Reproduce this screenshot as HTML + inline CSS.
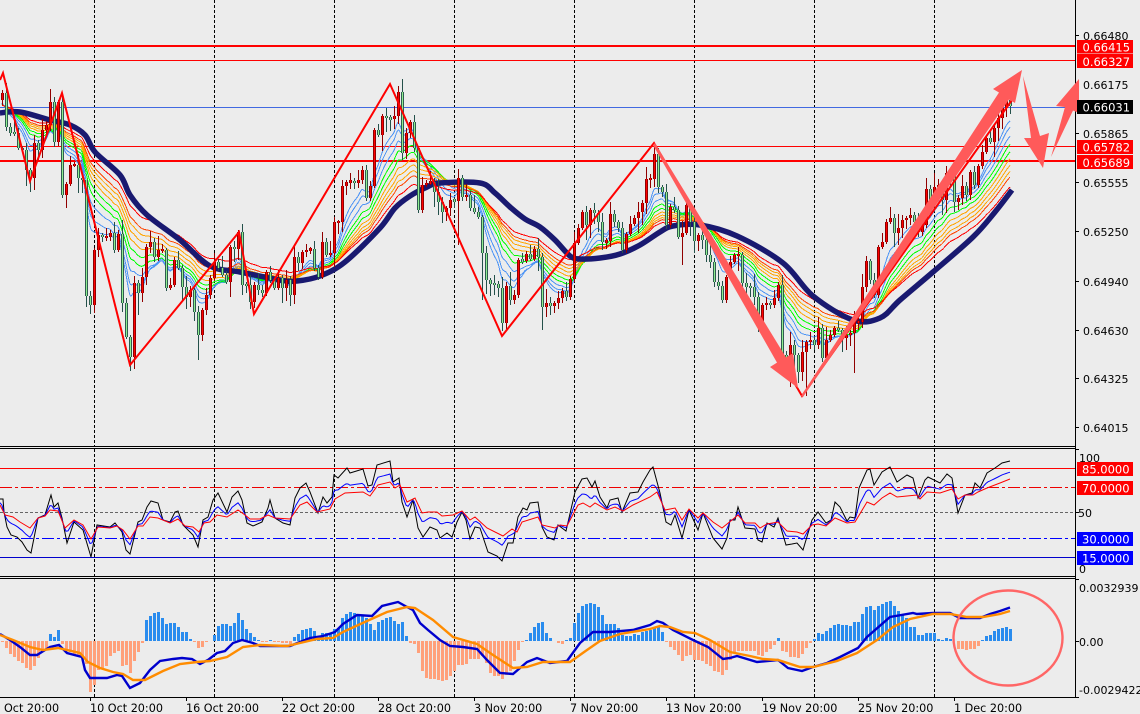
<!DOCTYPE html>
<html lang="en"><head><meta charset="utf-8"><title>Chart</title>
<style>
html,body{margin:0;padding:0;background:#ececec;width:1140px;height:714px;overflow:hidden}
svg{display:block;position:absolute;left:0;top:0}
text{font-family:"DejaVu Sans","Liberation Sans",sans-serif;font-size:11px;fill:#000}
.w{fill:#fff;font-size:11.5px}
.t{font-size:11.2px}
</style></head><body>
<svg id="s" width="1140" height="714" viewBox="0 0 1140 714" xmlns="http://www.w3.org/2000/svg">
<rect width="1140" height="714" fill="#ececec"/>
<g stroke="#000" stroke-dasharray="3 2" stroke-width="1" shape-rendering="crispEdges">
<path d="M94.5 0V446M214.5 0V446M334.5 0V446M454.5 0V446M574.5 0V446M694.5 0V446M814.5 0V446M934.5 0V446"/>
<path d="M94.5 449V576M214.5 449V576M334.5 449V576M454.5 449V576M574.5 449V576M694.5 449V576M814.5 449V576M934.5 449V576"/>
<path d="M94.5 579V697M214.5 579V697M334.5 579V697M454.5 579V697M574.5 579V697M694.5 579V697M814.5 579V697M934.5 579V697"/>
</g>
<g shape-rendering="crispEdges" fill="none">
<path d="M0 46H1075" stroke="#f00" stroke-width="2"/>
<path d="M0 60.5H1075" stroke="#f00"/>
<path d="M0 107.5H1075" stroke="#4169e1"/>
<path d="M0 146.5H1075" stroke="#f00"/>
<path d="M0 161H1075" stroke="#f00" stroke-width="2"/>
<path d="M0 468.5H1075" stroke="#f00"/>
<path d="M0 487.5H1075" stroke="#e00" stroke-dasharray="12 3 3 3"/>
<path d="M0 512.5H1075" stroke="#666" stroke-dasharray="3 2"/>
<path d="M0 538.5H1075" stroke="#00f" stroke-dasharray="12 3 3 3"/>
<path d="M0 557.5H1075" stroke="#00c"/>
</g>
<g id="rib" fill="none" stroke-width="1"></g>
<g id="navy" fill="none"></g>
<g id="can"></g>
<path fill="none" stroke="#f00" stroke-width="2" d="M0 80L3 73L30 181L62 93L130 365L239 232L254 314L390 84L502 336L654 143L802 396L1012 100"/>
<g id="rsi" fill="none" stroke-width="1"></g>
<g id="hist" shape-rendering="crispEdges"></g>
<g id="macd" fill="none" stroke-width="2.4"></g>
<ellipse cx="1008" cy="638" rx="54.5" ry="47.5" fill="none" stroke="#f66" stroke-width="2.4"/>
<g shape-rendering="crispEdges" fill="none" stroke="#000">
<path d="M0 446.5H1075M0 448.5H1075M0 576.5H1075M0 578.5H1075M0 697.5H1075M1075.5 0V697"/>
<path d="M1075 35.5H1079M1075 84.5H1079M1075 133.5H1079M1075 182.5H1079M1075 231.5H1079M1075 281.5H1079M1075 330.5H1079M1075 378.5H1079M1075 427.5H1079M1075 449.5H1079M1075 512.5H1079M1075 579.5H1079M1075 641.5H1079M1075 697.5H1079"/>
<path d="M90.5 697V701M186.5 697V701M282.5 697V701M378.5 697V701M474.5 697V701M570.5 697V701M666.5 697V701M762.5 697V701M858.5 697V701M954.5 697V701"/>
</g>
<g fill="#ff5a5a">
<polygon points="653,145 777,362.6 770,367 798,388 793,353 786,357.4 655,143"/>
<polygon points="801,396 999,92.5 993,89 1022,70 1015,103 1009,99.5 803,397"/>
<polygon points="1023,76 1031,138 1024,138 1043,168 1049,133 1040,136"/>
<polygon points="1051,157 1065,107 1056,106 1079,79 1079,113 1073,110.5"/>
</g>
<rect x="1077" y="40" width="56" height="13.5" fill="#f00"/>
<rect x="1077" y="54" width="56" height="14" fill="#f00"/>
<rect x="1077" y="100" width="56" height="14" fill="#000"/>
<rect x="1077" y="140" width="56" height="14" fill="#f00"/>
<rect x="1077" y="155" width="56" height="14" fill="#f00"/>
<rect x="1077" y="462" width="56" height="14" fill="#f00"/>
<rect x="1077" y="481" width="56" height="14" fill="#f00"/>
<rect x="1077" y="532" width="56" height="14" fill="#00f"/>
<rect x="1077" y="551" width="56" height="14" fill="#00f"/>
<text x="1083" y="40">0.66480</text>
<text class="w" x="1082.5" y="51.5">0.66415</text>
<text class="w" x="1082.5" y="66">0.66327</text>
<text x="1083" y="89">0.66175</text>
<text class="w" x="1082.5" y="111.5">0.66031</text>
<text x="1083" y="138">0.65865</text>
<text class="w" x="1082.5" y="151.5">0.65782</text>
<text class="w" x="1082.5" y="167">0.65689</text>
<text x="1083" y="187">0.65555</text>
<text x="1083" y="236">0.65250</text>
<text x="1083" y="286">0.64940</text>
<text x="1083" y="335">0.64630</text>
<text x="1083" y="383">0.64325</text>
<text x="1083" y="432">0.64015</text>
<text x="1079" y="462">100</text>
<text class="w" x="1082" y="473.5">85.0000</text>
<text class="w" x="1082" y="492.5">70.0000</text>
<text x="1078" y="517">50</text>
<text class="w" x="1082" y="543.5">30.0000</text>
<text class="w" x="1082" y="562.5">15.0000</text>
<text x="1079" y="573">0</text>
<text x="1079" y="592">0.0032939</text>
<text x="1079" y="646">0.00</text>
<text x="1079" y="694">-0.0029422</text>
<text class="t" x="4" y="712">Oct 20:00</text>
<text class="t" x="90" y="712">10 Oct 20:00</text>
<text class="t" x="186" y="712">16 Oct 20:00</text>
<text class="t" x="282" y="712">22 Oct 20:00</text>
<text class="t" x="378" y="712">28 Oct 20:00</text>
<text class="t" x="474" y="712">3 Nov 20:00</text>
<text class="t" x="570" y="712">7 Nov 20:00</text>
<text class="t" x="666" y="712">13 Nov 20:00</text>
<text class="t" x="762" y="712">19 Nov 20:00</text>
<text class="t" x="858" y="712">25 Nov 20:00</text>
<text class="t" x="954" y="712">1 Dec 20:00</text>
</svg>
<script>
(function(){
var NS="http://www.w3.org/2000/svg";
function P(par,d,attrs){var e=document.createElementNS(NS,"path");e.setAttribute("d",d);for(var k in attrs)e.setAttribute(k,attrs[k]);document.getElementById(par).appendChild(e);}
function pairs(s){return s.trim().split(/\s+/).map(function(p){var a=p.split(/[:,]/);return[+a[0],+a[1]];});}
function interp(t,x){if(x<=t[0][0])return t[0][1];for(var i=1;i<t.length;i++){if(x<=t[i][0]){var a=t[i-1],b=t[i];return a[1]+(b[1]-a[1])*(x-a[0])/(b[0]-a[0]);}}return t[t.length-1][1];}
function line(t){return "M"+t.map(function(p){return p[0]+" "+p[1];}).join("L");}
function smooth(t){var d="M"+t[0][0]+" "+t[0][1];for(var i=0;i<t.length-1;i++){var p0=t[Math.max(i-1,0)],p1=t[i],p2=t[i+1],p3=t[Math.min(i+2,t.length-1)];
 d+="C"+(p1[0]+(p2[0]-p0[0])/6).toFixed(1)+" "+(p1[1]+(p2[1]-p0[1])/6).toFixed(1)+" "+(p2[0]-(p3[0]-p1[0])/6).toFixed(1)+" "+(p2[1]-(p3[1]-p1[1])/6).toFixed(1)+" "+p2[0]+" "+p2[1];}return d;}
var C=pairs("2:93 6:127 10:133 14:133 18:148 22:150 26:170 30:178 34:143 38:150 42:130 46:125 50:102 54:142 58:102 62:195 66:184 70:165 74:165 78:178 82:180 86:296 90:305 94:250 98:235 102:237 106:237 110:233 114:250 118:234 122:303 126:337 130:357 134:283 138:293 142:277 146:247 150:242 154:257 158:250 162:250 166:288 170:285 174:260 178:268 182:287 186:297 190:290 194:312 198:335 202:310 206:295 210:278 214:262 218:268 222:275 226:282 230:247 234:249 238:232 242:285 246:285 250:302 254:285 258:290 262:293 266:272 270:280 274:288 278:278 282:288 286:280 290:295 294:257 298:263 302:252 306:250 310:249 314:268 318:277 322:242 326:255 330:253 334:222 338:222 342:186 346:182 350:181 354:183 358:180 362:170 366:198 370:186 374:130 378:135 382:116 386:118 390:119 394:116 398:92 402:153 406:133 410:122 414:148 418:210 422:185 426:183 430:182 434:192 438:202 442:212 446:208 450:200 454:201 458:178 462:197 466:195 470:208 474:212 478:217 482:253 486:280 490:284 494:284 498:288 502:323 506:286 510:300 514:295 518:260 522:261 526:254 530:259 534:249 538:257 542:307 546:303 550:306 554:303 558:298 562:291 566:297 570:279 574:243 578:228 582:212 586:225 590:210 594:213 598:222 602:242 606:241 610:214 614:222 618:228 622:250 626:234 630:224 634:218 638:212 642:203 646:179 650:179 654:154 658:187 662:192 666:225 670:207 674:210 678:237 682:233 686:205 690:222 694:241 698:235 702:240 706:255 710:262 714:282 718:286 722:300 726:277 730:262 734:255 738:255 742:283 746:287 750:287 754:297 758:325 762:305 766:303 770:305 774:298 778:285 782:355 786:372 790:345 794:355 798:372 802:352 806:342 810:340 814:345 818:328 822:358 826:340 830:335 834:328 838:330 842:338 846:335 850:333 854:322 858:322 862:287 866:261 870:280 874:295 878:247 882:242 886:222 890:218 894:233 898:228 902:220 906:218 910:215 914:222 918:232 922:225 926:189 930:200 934:187 938:185 942:200 946:173 950:175 954:202 958:198 962:186 966:195 970:172 974:185 978:166 982:152 986:138 990:142 994:128 998:118 1002:108 1006:100 1010:106");
var longB={66:208,198:360,854:373,682:265,482:300,542:330,122:312,138:315,458:245,806:396,786:378};
var longT={86:180,366:165,398:86,654:143,802:340};
var wR="",bR="",wG="",bG="";
var prev=100;
C.forEach(function(p,i){
 var x=p[0],c=p[1],o=prev;
 var h1=(x*7919%97)/97,h2=(x*104729%89)/89;
 var top=Math.min(o,c),bot=Math.max(o,c);
 var wt=longT[x]||top-2-h1*h1*12,wb=longB[x]||bot+2+h2*h2*14;
 if(bot-top<2){top-=1;bot+=1;}
 var up=c<o||(c==o&&i%2==0);
 var X=x+.5;
 var w="M"+X+" "+Math.round(wt)+"V"+Math.round(wb);
 var b="M"+X+" "+Math.round(top)+"V"+Math.round(bot);
 if(up){wR+=w;bR+=b;}else{wG+=w;bG+=b;}
 prev=c;
});
var ns=[7,9,12,15,18,21,24,27,30,36];
var cols=["#4d94f5","#4d94f5","#4d94f5","#00ff00","#00ff00","#ffa500","#ffa500","#ffa500","#ff4500","#ff0000"];
ns.forEach(function(n,j){
 var a=2/(n+1),v=106,pts=[];
 C.forEach(function(p){v=v+a*(p[1]-v);pts.push([p[0],Math.round(v*10)/10]);});
 P("rib",smooth(pts),{stroke:cols[j],"shape-rendering":"crispEdges"});
});
P("navy",smooth(pairs("0,113 20,112 50,120 70,125 85,135 95,152 120,175 130,195 147,215 180,240 210,266 240,272 280,280 297,281 320,276 345,262 380,228 395,208 410,196 425,188 440,183 480,183 495,193 510,207 525,219 540,227 555,240 570,256 580,259 600,258 620,254 640,245 660,232 673,226 700,225 737,236 783,263 813,296 853,320 880,318 900,300 933,272 973,237 995,212 1012,190")),{stroke:"#191970","stroke-width":5.5});
P("can",wG,{stroke:"#24504a","stroke-width":1,"shape-rendering":"crispEdges"});
P("can",wR,{stroke:"#900000","stroke-width":1,"shape-rendering":"crispEdges"});
P("can",bG,{stroke:"#2f5d50","stroke-width":3,"shape-rendering":"crispEdges"});
P("can",bG,{stroke:"#90ee90","stroke-width":1,"shape-rendering":"crispEdges"});
P("can",bR,{stroke:"#900000","stroke-width":3,"shape-rendering":"crispEdges"});
P("can",bR,{stroke:"#ff0000","stroke-width":1,"shape-rendering":"crispEdges"});
var black=pairs("0,499 3,499 4,512 7,527 11,535 17,537 22,542 27,550 31,553 38,518 45,515 51,495 54,507 58,503 62,518 67,543 74,522 83,530 91,557 97,525 110,527 115,523 122,532 126,550 130,554 138,522 142,520 147,507 151,501 158,503 163,520 170,522 175,512 178,511 183,525 193,535 198,547 203,520 208,517 213,500 218,493 227,512 232,497 238,491 242,500 247,523 253,526 262,522 268,508 270,500 275,518 283,523 290,525 295,498 300,488 306,483 310,492 318,513 323,497 327,503 332,497 334,475 338,478 347,468 350,473 363,469 368,486 372,485 377,465 390,461 393,482 399,478 402,502 407,517 413,500 418,528 423,537 430,527 437,530 440,538 447,533 452,537 457,522 462,512 466,520 470,539 475,527 480,528 488,552 497,556 502,561 508,543 513,543 518,517 523,508 527,510 530,503 538,502 542,527 547,537 554,540 558,525 566,531 575,492 582,479 587,478 592,487 595,481 600,497 607,508 610,500 618,498 622,512 630,493 638,492 643,482 650,470 653,467 660,493 666,522 671,525 675,515 682,538 689,510 698,530 703,513 713,538 722,549 727,538 730,520 735,520 738,507 745,528 755,529 758,540 762,542 767,523 774,527 778,518 786,545 792,544 797,543 803,550 812,520 818,512 826,523 831,520 835,502 840,507 847,521 850,517 855,518 859,488 867,470 870,469 874,485 882,472 890,467 897,482 907,475 913,478 918,498 925,480 928,477 940,483 947,474 952,478 958,513 965,495 972,493 975,483 980,488 987,473 995,468 1002,463 1010,461");
var red=pairs("0,505 5,515 13,517 20,522 30,528 38,518 45,516 50,510 58,511 65,528 74,520 83,525 91,539 98,527 110,528 117,526 123,530 130,539 138,526 143,526 150,517 158,518 170,523 178,519 185,526 193,527 199,532 204,523 210,522 217,515 227,517 238,510 245,515 250,519 260,519 268,515 275,518 290,519 300,505 307,502 317,512 330,509 335,499 345,493 363,492 370,496 378,485 390,482 395,488 400,485 407,502 415,498 422,513 428,512 437,512 442,516 453,515 462,511 470,520 475,517 487,528 503,536 512,529 517,532 522,522 538,517 542,525 555,528 560,525 567,526 578,505 583,503 590,507 595,503 607,510 615,507 623,511 633,505 650,497 657,492 665,510 675,508 682,520 689,509 698,518 703,513 713,522 722,528 732,520 738,515 745,523 755,523 760,528 767,524 778,522 787,531 797,532 803,534 812,525 818,524 826,526 835,518 847,523 855,522 867,502 874,505 882,498 890,493 897,497 917,495 920,499 927,492 940,493 952,489 958,499 965,495 973,495 978,492 987,488 1000,483 1010,479");
var blue=[];for(var x=0;x<=1010;x+=2){blue.push([x,Math.round((interp(red,x)*.62+interp(black,x)*.38)*10)/10]);}
P("rsi",line(black),{stroke:"#000"});
P("rsi",line(blue),{stroke:"#00f"});
P("rsi",line(red),{stroke:"#f00"});
var H=pairs("2:-1 6:-7 10:-13 14:-16 18:-20 22:-22 26:-27 30:-29 34:-25 38:-17 42:-11 46:-8 50:7 54:4 58:11 62:-3 66:-8 70:-11 74:-13 78:-15 82:-16 86:-23 90:-51 94:-44 98:-29 102:-27 106:-25 110:-15 114:-12 118:-10 122:-25 126:-24 130:-32 134:-20 138:-11 142:-2 146:21 150:25 154:28 158:29 162:23 166:17 170:18 174:18 178:14 182:9 186:9 190:2 194:-1 198:-7 202:-6 206:-1 210:0 214:6 218:15 222:17 226:17 230:15 234:18 238:28 242:21 246:12 250:8 254:4 258:1 262:-1 266:-1 270:1 274:-1 278:-1 282:-2 286:-2 290:-3 294:4 298:7 302:11 306:12 310:13 314:10 318:3 322:8 326:8 330:7 334:12 338:13 342:23 346:27 350:29 354:28 358:27 362:26 366:23 370:17 374:11 378:19 382:21 386:23 390:24 394:20 398:17 402:19 406:5 410:-2 414:-3 418:-12 422:-30 426:-37 430:-38 434:-38 438:-39 442:-40 446:-39 450:-35 454:-30 458:-24 462:-24 466:-23 470:-18 474:-18 478:-18 482:-15 486:-22 490:-32 494:-35 498:-35 502:-38 506:-34 510:-30 514:-20 518:-9 522:-1 526:1 530:8 534:14 538:18 542:19 546:8 550:3 554:0 558:-2 562:-3 566:1 570:3 574:18 578:28 582:35 586:37 590:38 594:37 598:34 602:26 606:17 610:17 614:17 618:13 622:6 626:5 630:5 634:7 638:6 642:9 646:10 650:11 654:14 658:14 662:9 666:-1 670:-6 674:-9 678:-14 682:-20 686:-15 690:-14 694:-19 698:-19 702:-20 706:-23 710:-25 714:-30 718:-31 722:-34 726:-29 730:-19 734:-11 738:-10 742:-10 746:-10 750:-10 754:-10 758:-14 762:-15 766:-11 770:-8 774:-4 778:3 782:-10 786:-11 790:-16 794:-16 798:-17 802:-13 806:-7 810:-2 814:2 818:8 822:7 826:10 830:13 834:16 838:17 842:16 846:16 850:15 854:19 858:19 862:27 866:34 870:35 874:31 878:35 882:37 886:39 890:40 894:35 898:30 902:27 906:23 910:14 914:14 918:6 922:6 926:8 930:8 934:8 938:2 942:1 946:3 950:2 954:0 958:-8 962:-8 966:-9 970:-8 974:-8 978:-5 982:1 986:5 990:6 994:10 998:12 1002:13 1006:14 1010:12");
var hb="",hs="";
H.forEach(function(p){if(p[1]==0)return;var s="M"+(p[0]+.5)+" 641V"+(641-p[1]);if(p[1]>0)hb+=s;else hs+=s;});
P("hist",hs,{stroke:"#ffa07a","stroke-width":3});
P("hist",hb,{stroke:"#2a8cee","stroke-width":3});
var mb=pairs("0,634 10,640 20,647 30,655 37,655 45,650 50,647 59,645 67,653 82,657 85,670 90,678 107,678 117,675 122,676 130,688 140,683 150,670 160,661 173,659 182,658 192,659 200,664 208,660 217,653 225,651 233,643 242,640 253,643 260,646 290,646 300,642 310,638 323,636 335,632 343,624 357,615 372,616 382,606 398,602 407,607 413,610 420,623 428,630 440,640 450,646 463,647 477,649 487,660 500,673 513,674 527,662 537,658 550,663 567,661 580,643 593,632 610,632 633,630 650,625 657,621 663,623 673,630 693,640 708,647 723,659 730,658 737,656 757,662 778,660 788,668 802,671 813,667 827,663 840,657 858,648 867,637 890,617 913,613 917,614 933,613 950,613 960,618 980,618 990,614 1000,611 1010,607.5");
var mo=pairs("0,635 13,640 30,647 43,650 58,648 80,653 88,662 100,668 113,672 123,674 133,680 145,680 163,671 180,664 197,662 210,661 227,657 243,647 260,645 287,646 300,643 317,639 333,638 343,632 367,621 387,612 407,607 415,608 433,620 453,637 477,644 493,655 513,668 527,667 543,662 570,662 587,650 600,641 620,634 650,629 660,626 670,627 683,632 695,633 710,640 730,652 750,656 763,659 778,660 800,667 813,667 837,661 857,653 877,640 893,627 910,619 933,614 950,614 967,617 983,617 1000,614 1010,611");
P("macd",line(mb),{stroke:"#0000cd"});
P("macd",line(mo),{stroke:"#ff8c00"});
})();
</script>
</body></html>
